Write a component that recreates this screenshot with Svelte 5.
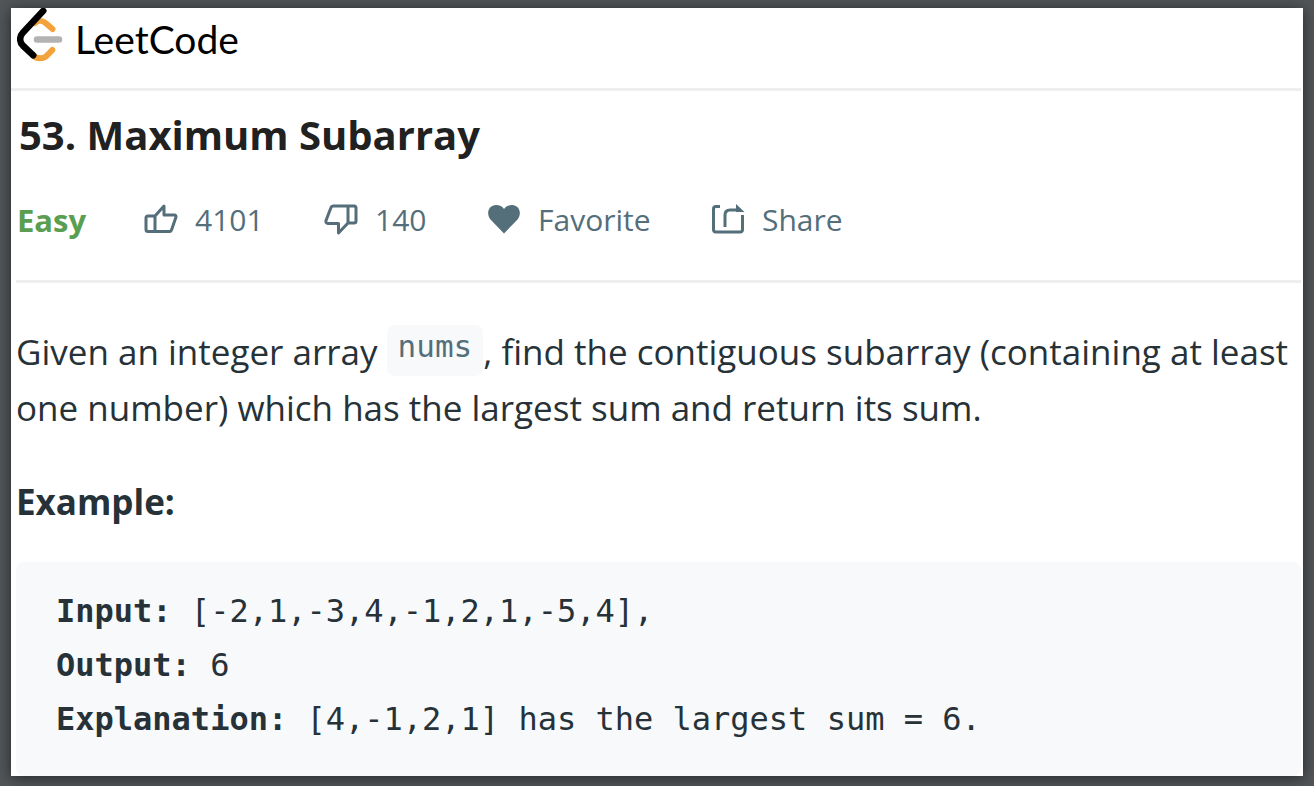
<script>
  const details = [
    { label: 'Input:', value: '[-2,1,-3,4,-1,2,1,-5,4],' },
    { label: 'Output:', value: '6' },
    { label: 'Explanation:', value: '[4,-1,2,1] has the largest sum = 6.' }
  ];
</script>

<div class="viewer">
  <div class="sheet">
    <header class="brand">
      <a class="logo" href="#top">
        <svg class="mark" width="46" height="54" viewBox="0 0 46 54" fill="none" stroke-linecap="round" stroke-linejoin="round" aria-hidden="true">
          <path d="M18 15C21 12.300 25.500 12.500 28.500 15L35.500 21" stroke="#f4a23c" stroke-width="6" />
          <path d="M16 47.500C20 51.200 26.500 51.200 30 47.500L35.300 42" stroke="#f4a23c" stroke-width="6" />
          <path d="M20 31.500H42" stroke="#b3b3b3" stroke-width="6.500" />
          <path d="M26.300 2.800L5.800 24.800C2.300 28.500 2.300 34 5.800 37.500L16.300 47.300" stroke="#000" stroke-width="6.500" />
        </svg>
        <span>LeetCode</span>
      </a>
    </header>

    <main>
      <h1>53. Maximum Subarray</h1>
      <div class="meta">
        <span class="level">Easy</span>
        <button class="likes" type="button" aria-label="Like, 4101">
          <svg width="34" height="34" viewBox="0 0 34 34" fill="none" stroke="currentColor" stroke-width="3" stroke-linejoin="round" aria-hidden="true">
            <path d="M11 13L20 3V12H30.500Q32 12 32 14L27.500 27Q27 28.500 25.500 28.500H4Q2 28.500 2 26.500V15Q2 13 4 13H11V28" />
          </svg>
          <span>4101</span>
        </button>
        <button class="dislikes" type="button" aria-label="Dislike, 140">
          <svg width="34" height="34" viewBox="0 0 34 34" fill="none" stroke="currentColor" stroke-width="3" stroke-linejoin="round" aria-hidden="true">
            <path d="M24 20L14.500 30V20.500H4Q1.500 20.500 2 17.500L7 4.500Q7.500 3 9 3H30Q32 3 32 5V18Q32 20 30 20H24V3" />
          </svg>
          <span>140</span>
        </button>
        <button class="favorite" type="button">
          <svg width="34" height="34" viewBox="0 0 34 34" fill="currentColor" aria-hidden="true">
            <path d="M17 30.500L3.500 16.500C-1.500 10 2 2 9 2C12.500 2 15.500 3.500 17 6C18.500 3.500 21.500 2 25 2C32 2 35.500 10 30.500 16.500Z" />
          </svg>
          <span>Favorite</span>
        </button>
        <button class="share" type="button">
          <svg width="34" height="34" viewBox="0 0 34 34" fill="none" stroke="currentColor" stroke-width="3" stroke-linejoin="round" aria-hidden="true">
            <path d="M9 3.500H5Q2.500 3.500 2.500 6V26.500Q2.500 29 5 29H29Q31.500 29 31.500 26.500V12M14 24V12Q14 7 19 7H26" />
            <path d="M25 1L33.500 9H25Z" fill="currentColor" stroke="none" />
          </svg>
          <span>Share</span>
        </button>
      </div>

      <section class="statement">
        <p>Given an integer array <code>nums</code>, find the contiguous subarray (containing at least one number) which has the largest sum and return its sum.</p>
        <h2>Example:</h2>
        <div class="example">
          {#each details as item}
            <div><strong>{item.label}</strong> {item.value}</div>
          {/each}
        </div>
      </section>
    </main>
  </div>
</div>

<style>
  :global(body) {
    margin: 0;
    background: #525659;
  }
  .viewer {
    box-sizing: border-box;
    min-height: 100vh;
    display: flex;
    padding: 8px 11px 10px;
    overflow: hidden;
    font-family: "Open Sans", "Noto Sans", sans-serif;
    color: #263238;
  }
  .sheet {
    flex: 1;
    min-width: 0;
    background: #fff;
    box-shadow: 0 2px 14px rgba(0, 0, 0, 0.55);
  }
  .brand {
    height: 80px;
    margin-right: 2px;
    border-bottom: 3px solid #eee;
  }
  .logo {
    display: inline-flex;
    gap: 12px;
    padding-left: 6px;
    color: #000;
    text-decoration: none;
    font: 39px/62px Lato, sans-serif;
  }
  main {
    padding: 0 2px 0 5px;
  }
  h1 {
    margin: 0;
    padding: 20px 3px 0;
    font-size: 40px;
    line-height: 48px;
    color: #212121;
  }
  .meta {
    display: flex;
    align-items: center;
    height: 121px;
    padding-left: 1px;
    border-bottom: 3px solid #eee;
    font-size: 30px;
    line-height: 44px;
    color: #546e7a;
  }
  .level {
    width: 127px;
    font-size: 31px;
    font-weight: 700;
    color: #5a9e51;
  }
  button {
    display: flex;
    align-items: center;
    gap: 17px;
    padding: 0;
    border: 0;
    background: none;
    font: inherit;
    color: inherit;
    text-align: left;
  }
  .likes {
    width: 180px;
  }
  .dislikes {
    width: 163px;
  }
  .favorite {
    width: 224px;
  }
  p {
    margin: 0 -2px 0 0;
    padding-top: 41px;
    font-size: 35px;
    line-height: 56px;
  }
  code {
    padding: 3px 11px 12px;
    border-radius: 8px;
    background: #f7f9fa;
    font: 31px/32px "DejaVu Sans Mono", monospace;
    color: #546e7a;
    vertical-align: 8px;
  }
  h2 {
    margin: 38px 0 32px;
    font-size: 35px;
    line-height: 56px;
  }
  .example {
    padding: 22px 40px 30px;
    border-radius: 8px;
    background: #f7f9fb;
    font: 32px/54px "DejaVu Sans Mono", monospace;
  }
</style>
